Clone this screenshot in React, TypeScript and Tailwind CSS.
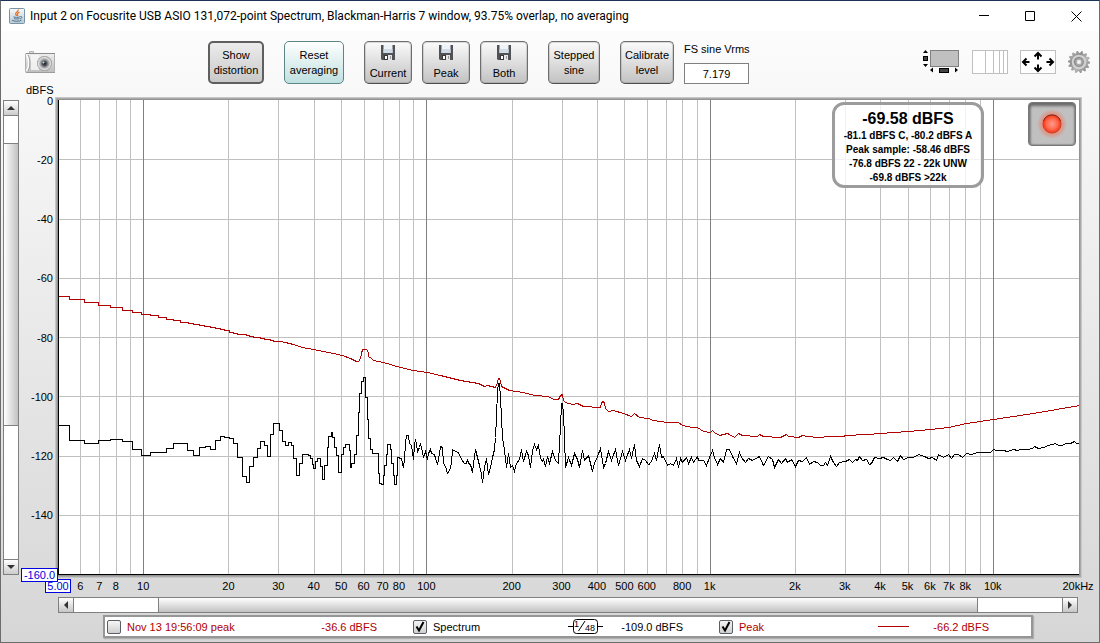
import type { ReactNode } from "react";

const X0 = 58;
const Y0 = 100;
const PLOT_W = 1021;
const PLOT_H = 475;
const F_MIN = 5;
const F_MAX = 20000;

const fraction = (f: number) => Math.log10(f / F_MIN) / Math.log10(F_MAX / F_MIN);

const gridFrequencies = [
  6, 7, 8, 9, 10, 20, 30, 40, 50, 60, 70, 80, 90, 100, 200, 300, 400, 500, 600, 700, 800, 900,
  1000, 2000, 3000, 4000, 5000, 6000, 7000, 8000, 9000, 10000,
];

const frequencyLabels: [number, string][] = [
  [6, "6"], [7, "7"], [8, "8"], [10, "10"], [20, "20"], [30, "30"], [40, "40"], [50, "50"],
  [60, "60"], [70, "70"], [80, "80"], [100, "100"], [200, "200"], [300, "300"], [400, "400"],
  [500, "500"], [600, "600"], [800, "800"], [1000, "1k"], [2000, "2k"], [3000, "3k"],
  [4000, "4k"], [5000, "5k"], [6000, "6k"], [7000, "7k"], [8000, "8k"], [10000, "10k"],
  [20000, "20kHz"],
];

const levelLabels = ["0", "-20", "-40", "-60", "-80", "-100", "-120", "-140"];

// Low-frequency bins are wide, so each pair is "right edge, level" of one flat step.
const spectrumSteps =
  "69,425 84,440 98,443 110,440 122,439 132,441 141,449 150,455 166,452 173,448 187,443 193,450 199,455 205,447 210,446 215,449 220,440 224,436 229,437 233,438 237,443 242,457 246,476 249,482 253,466 257,457 260,448 264,441 267,445 270,456 273,434 279,423 282,430 285,441 288,445 291,442 293,445 296,458 299,475 302,463 308,454 310,455 312,458 313,464 315,468 317,461 320,458 322,466 324,479 327,465 328,447 331,436 332,432 334,437 336,447 338,455 341,472 343,454 345,447 349,444 350,450 351,467 354,463 356,454 358,435 359,412 361,393 363,381 365,377 365,385 367,397 368,419 370,438 372,449 376,453 378,453 379,473 381,483 383,484 384,475 386,465 387,454 390,444 391,449 393,463 394,475 396,484 397,475 399,457 401,458";
const spectrumLine =
  "402,463 403,467 404,458 405,443 406,435 408,435 409,443 411,445 413,459 414,445 415,439 416,444 417,451 419,447 420,443 422,451 423,457 425,451 427,459 428,453 430,449 431,453 434,454 435,458 437,464 439,453 440,446 442,447 443,463 445,466 447,473 449,470 451,463 452,449 455,451 458,452 461,459 464,463 466,463 467,459 468,463 470,464 472,472 473,463 475,449 477,457 479,465 481,474 482,482 484,467 486,458 488,474 490,467 492,457 494,449 495,437 496,417 497,390 498,383 499,383 500,397 501,417 502,437 504,450 506,467 508,453 510,467 512,465 514,471 516,463 519,459 521,449 523,461 526,451 528,455 530,467 532,450 534,444 536,449 538,445 540,458 542,461 543,459 545,466 547,456 549,463 552,451 555,460 558,463 559,443 560,427 561,403 562,403 563,413 564,437 565,467 568,457 571,465 574,453 577,459 579,467 582,450 584,460 588,455 590,463 592,471 594,462 596,459 600,448 603,467 605,463 608,451 611,460 615,449 618,465 622,451 625,460 629,449 631,458 634,444 636,460 639,466 642,458 645,460 648,464 650,463 654,453 656,460 659,444 661,457 663,456 667,465 670,463 673,465 676,458 678,467 680,458 682,462 686,457 688,463 691,457 693,462 697,456 698,460 703,460 706,465 709,457 712,450 714,457 717,464 720,458 723,462 726,449 729,449 732,456 736,463 739,452 741,457 745,462 748,458 752,460 759,456 763,465 768,456 772,459 774,467 778,459 781,463 785,458 787,462 791,459 795,466 798,460 802,461 806,457 809,464 813,461 817,462 820,465 823,465 825,462 827,465 830,456 833,462 836,466 839,462 845,461 849,459 852,462 855,459 857,460 859,456 862,460 866,459 869,464 871,463 874,457 879,458 883,457 887,459 890,460 893,457 897,461 900,455 903,459 908,457 913,457 918,454 921,455 924,456 928,458 932,457 936,460 938,454 943,457 948,454 951,458 954,454 958,454 962,457 966,453 971,454 977,452 983,452 990,452 993,449 996,450 999,450 1003,450 1007,451 1010,450 1013,449 1017,450 1020,449 1023,449 1027,449 1032,448 1034,446 1038,448 1043,447 1048,445 1055,443 1058,445 1062,445 1065,443 1070,443 1074,441 1076,443 1079,443";
const peakSteps =
  "69,296 84,299 98,302 110,305 122,307 132,310 141,312 150,314 158,315 166,317 173,319 180,320 188,322 193,323 199,324 204,325 210,326 215,327 220,328 224,329 229,330 233,332 237,333 246,334 249,335 253,336 260,337 264,338 270,339 273,340 279,341";
const peakLine =
  "285,342 293,344 302,347 313,349 323,351 333,353 342,355 350,358 356,361 358,361 360,358 361,353 362,349 366,349 368,352 368,356 371,358 373,360 383,362 400,367 413,370 427,372 440,375 460,380 478,383 484,386 487,385 495,387 497,382 498,378 499,378 500,381 501,386 505,388 509,390 523,392 534,395 548,396 553,399 558,399 560,395 562,394 563,400 565,402 572,404 577,403 583,406 600,407 601,403 602,401 604,402 605,408 608,411 613,410 623,413 631,416 634,413 639,417 648,418 653,420 667,422 678,422 682,425 692,427 697,427 703,431 710,432 712,430 714,432 719,435 727,433 734,437 738,433 742,435 757,436 759,434 763,436 780,437 786,434 788,436 798,437 802,435 807,436 817,437 830,436 843,436 845,435 867,434 880,433 894,432 908,431 930,429 948,427 966,423 993,419 1033,413 1079,405";

function tracePath(steps: string, line: string) {
  const flat = steps.split(" ").map((p) => p.split(","));
  const start = `M${X0},${flat[0][1]}`;
  return start + flat.map(([x, y]) => `V${y}H${x}`).join("") + "L" + line.split(" ").join("L");
}

function Plot() {
  return (
    <svg
      className="col-start-1 row-start-1 block h-full w-full"
      viewBox={`${X0} ${Y0} ${PLOT_W} ${PLOT_H}`}
      preserveAspectRatio="none"
      shapeRendering="crispEdges"
      fill="none"
      role="img"
      aria-label="Spectrum"
    >
      <g transform="translate(0.5 0.5)">
        {[1, 2, 3, 4, 5, 6, 7].map((i) => {
          const y = Math.floor(Y0 + 0.5 + i * 59.25);
          return <path key={i} d={`M58 ${y}H1079`} stroke="#c0c0c0" />;
        })}
        {gridFrequencies.map((f) => {
          const x = Math.round(X0 + fraction(f) * (PLOT_W - 1));
          const major = f === 10 || f === 100 || f === 1000 || f === 10000;
          return <path key={f} d={`M${x} 99V575`} stroke={major ? "#808080" : "#c0c0c0"} />;
        })}
        <path d={tracePath(spectrumSteps, spectrumLine)} stroke="#000" />
        <path d={tracePath(peakSteps, peakLine)} stroke="#b00000" />
        <path d="M58 99V574H1079" stroke="#000" />
      </g>
    </svg>
  );
}

function ToolButton({ className, children }: { className: string; children: ReactNode }) {
  return (
    <button
      type="button"
      className={`flex h-[43px] flex-col items-center justify-center rounded-[5px] border text-center leading-[15px] ${className}`}
    >
      {children}
    </button>
  );
}

const plain = "border-[#6e6e6e] border-b-[#4e4e4e] bg-linear-to-b from-[#fbfbfb] to-[#c2c2c2] shadow-[inset_0_0_0_1px_rgba(120,120,120,0.25)]";

function Floppy() {
  return (
    <svg width="14" height="15" viewBox="0 0 14 15" className="mb-1.5 block">
      <path d="M0 0h14v15H1L0 14z" fill="#505256" />
      <path d="M2.500 0h9v8h-9z" fill="#eef3f8" />
      <path d="M2.500 4h9v4h-9z" fill="#cfdae5" />
      <path d="M3 10h8v5H3z" fill="#35373a" />
      <path d="M7 10h4v5H7z" fill="#e6e6e6" />
      <path d="M4 11h2v3H4z" fill="#fff" />
      <path d="M9 11h1v3H9z" fill="#9a9a9a" />
    </svg>
  );
}

function JavaIcon() {
  return (
    <svg width="16" height="16" viewBox="0 0 16 16">
      <defs>
        <linearGradient id="java-bg" x1="0" y1="0" x2="0" y2="1">
          <stop offset="0" stopColor="#f8fafb" />
          <stop offset="1" stopColor="#b9c8d2" />
        </linearGradient>
      </defs>
      <rect x=".5" y=".5" width="15" height="15" rx="1" fill="url(#java-bg)" stroke="#7893a6" />
      <path d="M9.200 1.500c.7 2-3.200 2.800-2.600 4.600.2.800 1 1.200 1 2M10.500 4.200C8.500 5 8 5.800 8.600 6.600c.4.600.2 1-.2 1.500" fill="none" stroke="#e8762c" strokeWidth="1.300" />
      <path d="M4.500 8.800c2 .8 4.500.8 6.500 0M5 10.500c1.800.7 3.800.7 5.500 0M3 12.200c2.500 1.400 7 1.400 9.500 0M11.300 8.500c2.400-.4 2 1.900-.3 2.400" fill="none" stroke="#4a7594" strokeWidth="1" />
    </svg>
  );
}

function Camera() {
  return (
    <svg width="31" height="22" viewBox="0 0 31 22">
      <defs>
        <linearGradient id="cam" x1="0" y1="0" x2="0" y2="1">
          <stop offset="0" stopColor="#efefef" />
          <stop offset="1" stopColor="#bdbdbd" />
        </linearGradient>
        <radialGradient id="lens">
          <stop offset="0" stopColor="#15181c" />
          <stop offset=".28" stopColor="#4b5058" />
          <stop offset=".5" stopColor="#989898" />
          <stop offset=".8" stopColor="#e0e0e0" />
          <stop offset="1" stopColor="#8d8d8d" />
        </radialGradient>
      </defs>
      <path d="M4.500 2V.5h4V2" fill="#ddd" stroke="#b5b5b5" />
      <rect x=".5" y="2.500" width="29" height="19" rx="1" fill="url(#cam)" stroke="#b0b0b0" />
      <path d="M1 2.500h29" stroke="#8c8c8c" />
      <path d="M1 21.500h29" stroke="#9c9c9c" />
      <path d="M1.500 4c3 4 3 12 0 16" fill="none" stroke="#fff" strokeWidth="1.500" />
      <path d="M3 4c2.500 4 2.500 12 0 16" fill="none" stroke="#9a9a9a" />
      <rect x="6" y="4" width="8" height="15" fill="#f8f8f8" opacity=".8" />
      <circle cx="19.500" cy="12.500" r="7.500" fill="url(#lens)" />
      <circle cx="18.500" cy="11.500" r="1" fill="#cfd8e2" />
    </svg>
  );
}

function ScrollbarsIcon() {
  return (
    <svg width="37" height="24" viewBox="0 0 37 24">
      <rect x="7.500" y=".5" width="28" height="16" fill="#c0c0c0" stroke="#808080" />
      <path d="M2.500 0L5 3H0zM2.500 17L5 14H0z" fill="#000" />
      <rect x=".5" y="6.500" width="4" height="4" fill="#444" stroke="#000" />
      <path d="M10 17.500v5L7 20zM32 17.500v5l3-2.500z" fill="#000" />
      <rect x="16.500" y="18.500" width="9" height="4" fill="#444" stroke="#000" />
    </svg>
  );
}

function LinesIcon() {
  return (
    <svg width="36" height="24" viewBox="0 0 36 24" shapeRendering="crispEdges">
      <rect x=".5" y=".5" width="35" height="23" fill="#fff" stroke="#c0c0c0" />
      <path d="M13.500 0v24M21.500 0v24M27.500 0v24M31.500 0v24" stroke="#c0c0c0" />
    </svg>
  );
}

function ArrowsIcon() {
  return (
    <svg width="36" height="24" viewBox="0 0 36 24">
      <rect x=".5" y=".5" width="35" height="23" fill="#fff" stroke="#c0c0c0" />
      <g fill="none" stroke="#000" strokeWidth="2">
        <path d="M18 9.500V3M14.500 6.500L18 3l3.500 3.500M18 14.500V21M14.500 17.500L18 21l3.500-3.500" />
        <path d="M9.500 12H3M6.500 8.500L3 12l3.500 3.500M26.500 12H33M29.500 8.500L33 12l-3.500 3.500" />
      </g>
    </svg>
  );
}

const gearOutline = Array.from({ length: 14 * 4 }, (_, i) => {
  const radius = i % 4 < 2 ? 11 : 8.8;
  const angle = ((i + (i % 4 === 0 ? 0.2 : i % 4 === 1 ? -0.1 : 0)) * 2 * Math.PI) / 56;
  return `${(11 + radius * Math.cos(angle)).toFixed(2)},${(11 + radius * Math.sin(angle)).toFixed(2)}`;
}).join(" ");

function GearIcon() {
  return (
    <svg width="22" height="22" viewBox="0 0 22 22">
      <defs>
        <linearGradient id="gear" x1="0" y1="0" x2="1" y2="1">
          <stop offset="0" stopColor="#c4c4c4" />
          <stop offset=".35" stopColor="#8e8e8e" />
          <stop offset=".6" stopColor="#bcbcbc" />
          <stop offset="1" stopColor="#6c6c6c" />
        </linearGradient>
      </defs>
      <polygon points={gearOutline} fill="url(#gear)" stroke="#7c7c7c" strokeWidth=".4" />
      <circle cx="11" cy="11" r="6.300" fill="none" stroke="#d2d2d2" strokeWidth="2" />
      <circle cx="11" cy="11" r="4.300" fill="#a8a8a8" stroke="#848484" strokeWidth=".8" />
      <rect x="8.800" y="8.800" width="4.400" height="4.400" rx="1" fill="#f4f4f4" stroke="#a0a0a0" strokeWidth=".6" />
    </svg>
  );
}

function VerticalScroll() {
  const end = "flex h-[15px] shrink-0 items-center justify-center bg-linear-to-b from-white to-[#cccccc]";
  return (
    <div className="flex w-4 shrink-0 flex-col border border-[#808080] bg-white">
      <button type="button" aria-label="Scroll up" className={`${end} border-b border-[#808080]`}>
        <svg width="8" height="4" viewBox="0 0 8 4"><path d="M4 0l4 4H0z" fill="#333" /></svg>
      </button>
      <div className="grow-[27] basis-0" />
      <div className="grow-[282] basis-0 border-y border-[#808080] bg-linear-to-r from-white to-[#c2c2c2]" />
      <div className="grow-[134] basis-0" />
      <button type="button" aria-label="Scroll down" className={`${end} border-t border-[#808080]`}>
        <svg width="8" height="4" viewBox="0 0 8 4"><path d="M4 4l4-4H0z" fill="#333" /></svg>
      </button>
    </div>
  );
}

function HorizontalScroll() {
  const end = "flex w-[15px] shrink-0 items-center justify-center bg-linear-to-b from-white to-[#c6c6c6]";
  return (
    <div className="mr-[21px] ml-[57px] flex h-4 shrink-0 border border-[#808080] bg-white">
      <button type="button" aria-label="Scroll left" className={`${end} border-r border-[#808080]`}>
        <svg width="4" height="8" viewBox="0 0 4 8"><path d="M0 4l4-4v8z" fill="#333" /></svg>
      </button>
      <div className="grow-[84] basis-0" />
      <div className="grow-[821] basis-0 border-x border-[#808080] bg-linear-to-b from-white to-[#c2c2c2]" />
      <div className="grow-[84] basis-0" />
      <button type="button" aria-label="Scroll right" className={`${end} border-l border-[#808080]`}>
        <svg width="4" height="8" viewBox="0 0 4 8"><path d="M4 4L0 0v8z" fill="#333" /></svg>
      </button>
    </div>
  );
}

function LegendItem(props: { label: string; value: string; checked: boolean; red: boolean; mark?: ReactNode }) {
  return (
    <div className={`flex w-[306px] items-center ${props.red ? "text-[#b00000]" : "text-black"}`}>
      <label className="flex grow items-center gap-1.5">
        <span className="grid size-3.5 shrink-0">
          <input
            type="checkbox"
            defaultChecked={props.checked}
            className="peer col-start-1 row-start-1 size-3.5 appearance-none rounded-[2px] border border-[#5a5f66] bg-linear-to-b from-[#f6f6f6] to-[#cfcfcf]"
          />
          <svg viewBox="0 0 14 14" className="pointer-events-none col-start-1 row-start-1 hidden size-3.5 peer-checked:block">
            <path d="M3.500 6.500L6 10.500L10.500 2" fill="none" stroke="#000" strokeWidth="2" />
          </svg>
        </span>
        {props.label}
      </label>
      {props.mark}
      <span className="mr-9 w-20 text-right">{props.value}</span>
    </div>
  );
}

function SmoothingMark() {
  return (
    <svg width="35" height="15" viewBox="0 0 35 15" fill="none" stroke="#000">
      <path d="M0 7.500h5M30 7.500h5" />
      <rect x="5.500" y=".5" width="24" height="14" rx="3" />
      <path d="M10.500 12L17 2" />
      <text x="6" y="8" fontSize="9" fill="#000" stroke="none">1</text>
      <text x="17" y="12" fontSize="9" fill="#000" stroke="none">48</text>
    </svg>
  );
}

export default function App() {
  return (
    <div className="flex h-screen min-h-[480px] flex-col overflow-hidden border border-[#6c6c6c] border-t-[#1c3358] bg-white font-['Liberation_Sans',Arial,sans-serif] text-[11px] leading-[14px] text-black">
      <header className="flex h-[30px] shrink-0 items-center bg-white pl-2">
        <JavaIcon />
        <h1 className="ml-[5px] grow truncate font-[Roboto,'Noto_Sans',sans-serif] text-[12px] leading-4">
          Input 2 on Focusrite USB ASIO 131,072-point Spectrum, Blackman-Harris 7 window, 93.75% overlap, no averaging
        </h1>
        <button type="button" aria-label="Minimize" className="flex h-full w-[46px] items-center justify-center">
          <svg width="11" height="11" viewBox="0 0 11 11"><path d="M0 4.500h10" stroke="#000" /></svg>
        </button>
        <button type="button" aria-label="Maximize" className="flex h-full w-[46px] items-center justify-center">
          <svg width="11" height="11" viewBox="0 0 11 11"><path d="M.5.5h9v9h-9z" fill="none" stroke="#000" /></svg>
        </button>
        <button type="button" aria-label="Close" className="flex h-full w-[46px] items-center justify-center">
          <svg width="11" height="11" viewBox="0 0 11 11"><path d="M.5.5l10 10M10.500.5l-10 10" stroke="#000" /></svg>
        </button>
      </header>

      <main className="flex min-h-0 grow flex-col bg-linear-to-b from-[#fcfcfc] to-[#d6d6d6]">
        <div className="flex h-[69px] shrink-0 pt-2.5 pr-[9px]">
          <div className="flex w-[183px] shrink-0 flex-col items-start pl-6">
            <button type="button" aria-label="Capture image" className="mt-2.5"><Camera /></button>
            <span className="mt-2.5 pl-px">dBFS</span>
          </div>
          <div className="ml-6 flex items-start gap-5">
            <ToolButton className="w-14 border-2 border-[#5f5f5f] bg-linear-to-b from-[#ececec] to-[#c9c9c9]">
              Show<br />distortion
            </ToolButton>
            <ToolButton className="w-[60px] border-[#5d8586] bg-linear-to-b from-[#ffffff] to-[#bfe0e0]">
              Reset<br />averaging
            </ToolButton>
            <div className="flex gap-2.5">
              <ToolButton className={`w-12 ${plain}`}><Floppy />Current</ToolButton>
              <ToolButton className={`w-12 ${plain}`}><Floppy />Peak</ToolButton>
              <ToolButton className={`w-12 ${plain}`}><Floppy />Both</ToolButton>
            </div>
            <ToolButton className={`w-[52px] ${plain}`}>Stepped<br />sine</ToolButton>
            <ToolButton className={`w-[54px] ${plain}`}>Calibrate<br />level</ToolButton>
          </div>
          <div className="ml-2.5 flex flex-col pt-px">
            <label htmlFor="vrms">FS sine Vrms</label>
            <input id="vrms" defaultValue="7.179" className="mt-[7px] h-[21px] w-[65px] border border-[#808080] bg-white text-center" />
          </div>
          <div className="ml-auto flex items-start gap-3 pt-[9px]">
            <button type="button" aria-label="Scrollbars"><ScrollbarsIcon /></button>
            <button type="button" aria-label="Frequency axis"><LinesIcon /></button>
            <button type="button" aria-label="Move"><ArrowsIcon /></button>
            <button type="button" aria-label="Settings" className="pt-px"><GearIcon /></button>
          </div>
        </div>

        <div className="flex min-h-0 grow pr-5 pl-0.5">
          <VerticalScroll />
          <div className="relative z-10 flex w-[39px] shrink-0 flex-col items-end justify-between">
            {levelLabels.map((label) => (
              <span key={label} className="flex h-px items-center pr-[5px]">{label}</span>
            ))}
            <div className="flex h-px items-center">
              <input aria-label="Lowest level" defaultValue="-160.0" className="h-3.5 w-[37px] border border-[#0000e0] bg-white text-center leading-3 text-[#0000e0]" />
            </div>
          </div>
          <div className="relative grid min-h-0 min-w-0 grow bg-white shadow-[0_0_0_1px_#939393,0_0_0_2px_#a9a9a9,0_0_0_3px_#c6c6c6]">
            <Plot />
            <div className="absolute top-0.5 right-[95px] w-[152px] rounded-xl border-3 border-[#9c9c9c] bg-white/80 pt-1 text-center text-[10px] leading-[14px] font-bold">
              <p className="text-[16px] leading-5">-69.58 dBFS</p>
              <p>-81.1 dBFS C, -80.2 dBFS A</p>
              <p>Peak sample: -58.46 dBFS</p>
              <p>-76.8 dBFS 22 - 22k UNW</p>
              <p>-69.8 dBFS &gt;22k</p>
            </div>
            <button
              type="button"
              aria-label="Record"
              className="absolute top-0.5 right-[3px] flex h-11 w-12 items-center justify-center rounded-[4px] border border-[#777777] bg-[#c0c0c0] shadow-[inset_0_3px_3px_#6a6a6a,inset_2px_0_2px_#8a8a8a,inset_-1px_-1px_1px_#a0a0a0]"
            >
              <svg width="32" height="32" viewBox="0 0 32 32">
                <defs>
                  <radialGradient id="glow">
                    <stop offset=".55" stopColor="#ff6040" stopOpacity=".6" />
                    <stop offset="1" stopColor="#ff6040" stopOpacity="0" />
                  </radialGradient>
                  <radialGradient id="led">
                    <stop offset="0" stopColor="#ff9c8c" />
                    <stop offset=".6" stopColor="#ff6a50" />
                    <stop offset="1" stopColor="#ff3210" />
                  </radialGradient>
                </defs>
                <circle cx="16" cy="16" r="15" fill="url(#glow)" />
                <circle cx="16" cy="16" r="9" fill="url(#led)" stroke="#c4402a" />
                <path d="M7.500 13a9 9 0 0 1 17 0" fill="none" stroke="#7e2a1a" />
              </svg>
            </button>
          </div>
        </div>

        <div className="relative mr-[21px] ml-[57px] h-[22px] shrink-0">
          <input
            aria-label="Lowest frequency"
            defaultValue="5.00"
            className="absolute top-1 left-0 h-3.5 w-[26px] -translate-x-1/2 border border-[#0000e0] bg-white text-center leading-3 text-[#0000e0]"
          />
          {frequencyLabels.map(([f, label]) => (
            <span key={f} className="absolute top-1 -translate-x-1/2" style={{ left: `${fraction(f) * 100}%` }}>
              {label}
            </span>
          ))}
        </div>

        <HorizontalScroll />

        <footer className="mt-0.5 mr-[66px] mb-1 ml-[102px] flex h-[23px] shrink-0 items-center border-2 border-[#969696] bg-white pl-0.5 shadow-[1px_1px_1px_#b0b0b0]">
          <LegendItem label="Nov 13 19:56:09 peak" value="-36.6 dBFS" checked={false} red />
          <LegendItem label="Spectrum" value="-109.0 dBFS" checked red={false} mark={<SmoothingMark />} />
          <LegendItem
            label="Peak"
            value="-66.2 dBFS"
            checked
            red
            mark={<svg width="31" height="1" viewBox="0 0 31 1"><path d="M0 .5h31" stroke="#b00000" /></svg>}
          />
        </footer>
      </main>
    </div>
  );
}
